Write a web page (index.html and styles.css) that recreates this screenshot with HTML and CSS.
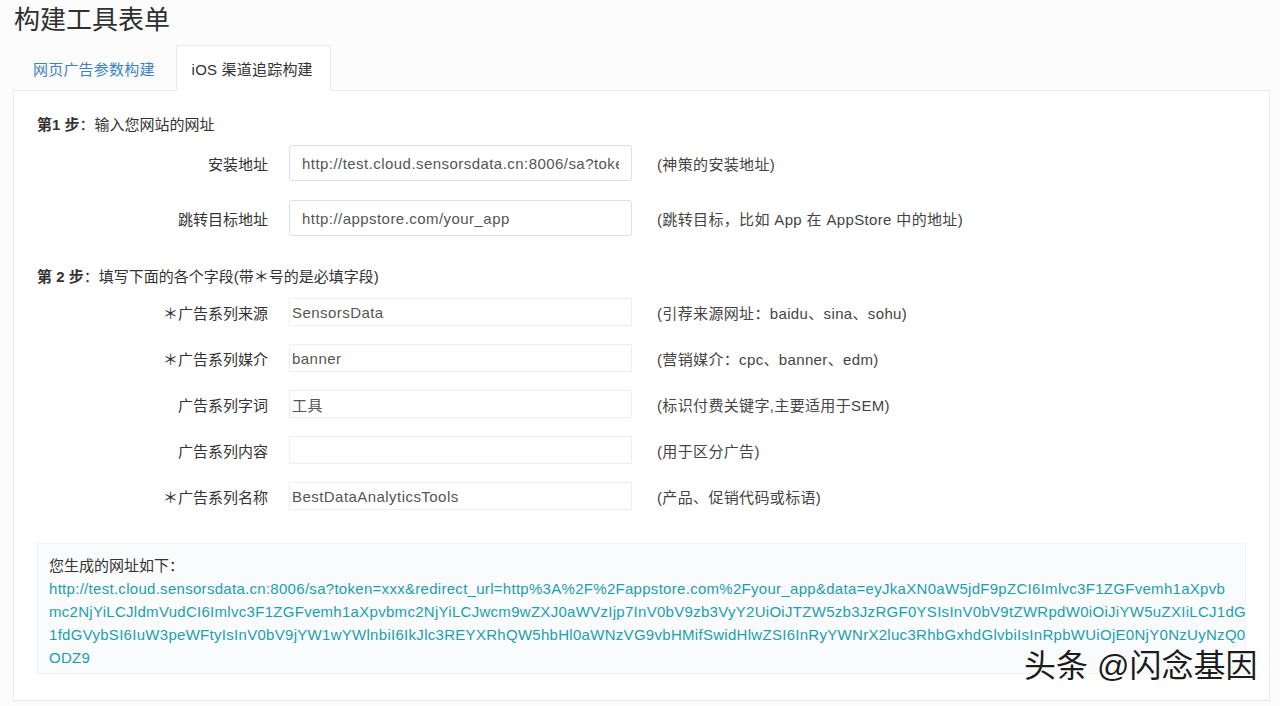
FILE: index.html
```html
<!DOCTYPE html>
<html lang="zh-CN">
<head>
<meta charset="utf-8">
<title>构建工具表单</title>
<link rel="stylesheet" href="styles.css">
</head>
<body>
<div class="page">
  <h1 class="title">构建工具表单</h1>
  <ul class="tabs">
    <li class="tab"><a class="tab-link">网页广告参数构建</a></li>
    <li class="tab active"><a class="tab-link">iOS 渠道追踪构建</a></li>
  </ul>
  <div class="panel">
    <div class="step"><b>第1 步</b>：输入您网站的网址</div>
    <div class="rows rows-lg">
      <div class="row">
        <label class="label">安装地址</label>
        <input class="input input-lg" type="text" readonly value="http://test.cloud.sensorsdata.cn:8006/sa?token=xxx">
        <span class="hint">(神策的安装地址)</span>
      </div>
      <div class="row">
        <label class="label">跳转目标地址</label>
        <input class="input input-lg" type="text" readonly value="http://appstore.com/your_app">
        <span class="hint">(跳转目标，比如 App 在 AppStore 中的地址)</span>
      </div>
    </div>
    <div class="step step2"><b>第 2 步</b>：填写下面的各个字段(带＊号的是必填字段)</div>
    <div class="rows rows-sm">
      <div class="row">
        <label class="label">＊广告系列来源</label>
        <input class="input input-sm" type="text" readonly value="SensorsData">
        <span class="hint">(引荐来源网址：baidu、sina、sohu)</span>
      </div>
      <div class="row">
        <label class="label">＊广告系列媒介</label>
        <input class="input input-sm" type="text" readonly value="banner">
        <span class="hint">(营销媒介：cpc、banner、edm)</span>
      </div>
      <div class="row">
        <label class="label">广告系列字词</label>
        <input class="input input-sm" type="text" readonly value="工具">
        <span class="hint">(标识付费关键字,主要适用于SEM)</span>
      </div>
      <div class="row">
        <label class="label">广告系列内容</label>
        <input class="input input-sm" type="text" readonly value="">
        <span class="hint">(用于区分广告)</span>
      </div>
      <div class="row">
        <label class="label">＊广告系列名称</label>
        <input class="input input-sm" type="text" readonly value="BestDataAnalyticsTools">
        <span class="hint">(产品、促销代码或标语)</span>
      </div>
    </div>
    <div class="result">
      <div class="result-title">您生成的网址如下：</div>
      <div class="url">
        <span class="url-line">http://test.cloud.sensorsdata.cn:8006/sa?token=xxx&amp;redirect_url=http%3A%2F%2Fappstore.com%2Fyour_app&amp;data=eyJkaXN0aW5jdF9pZCI6Imlvc3F1ZGFvemh1aXpvb</span>
        <span class="url-line">mc2NjYiLCJldmVudCI6Imlvc3F1ZGFvemh1aXpvbmc2NjYiLCJwcm9wZXJ0aWVzIjp7InV0bV9zb3VyY2UiOiJTZW5zb3JzRGF0YSIsInV0bV9tZWRpdW0iOiJiYW5uZXIiLCJ1dG</span>
        <span class="url-line">1fdGVybSI6IuW3peWFtyIsInV0bV9jYW1wYWlnbiI6IkJlc3REYXRhQW5hbHl0aWNzVG9vbHMifSwidHlwZSI6InRyYWNrX2luc3RhbGxhdGlvbiIsInRpbWUiOjE0NjY0NzUyNzQ0</span>
        <span class="url-line">ODZ9</span>
      </div>
    </div>
  </div>
  <div class="watermark">头条 @闪念基因</div>
</div>
</body>
</html>
```

FILE: styles.css
```css
* { box-sizing: border-box; }
html, body {
  margin: 0;
  padding: 0;
  background: #fcfcfd;
}
body {
  font-family: "Liberation Sans", "Noto Sans CJK SC", sans-serif;
  font-size: 15px;
  color: #333;
  width: 1280px;
  height: 706px;
  overflow: hidden;
}
.page {
  position: relative;
  height: 706px;
  padding: 5px 10px 0 13px;
}
.title {
  margin: 0 0 0 1px;
  font-size: 26px;
  line-height: 30px;
  font-weight: normal;
  color: #2f2f2f;
}
.tabs {
  list-style: none;
  margin: 10px 0 0 0;
  padding: 0 0 0 2px;
  display: flex;
  border-bottom: 1px solid #e7e9ec;
  height: 46px;
}
.tab {
  height: 46px;
  margin-bottom: -1px;
}
.tab-link {
  display: flex;
  align-items: center;
  height: 46px;
  padding: 0 20px 0 17px;
  color: #3b82c4;
  letter-spacing: 0.2px;
  border: 1px solid transparent;
  border-radius: 3px 3px 0 0;
}
.tab.active .tab-link {
  color: #333;
  background: #fff;
  border-color: #e7e9ec;
  border-bottom-color: #fff;
  padding: 0 17px 0 15px;
}
.panel {
  background: #fff;
  border: 1px solid #e7e9ec;
  border-top: none;
  height: 610px;
  padding: 24px 23px 0 23px;
}
.step {
  line-height: 20px;
  color: #333;
  margin-bottom: 10px;
}
.step b { font-weight: bold; }
.step2 { margin-top: 31px; margin-bottom: 11px; }
.rows {
  display: flex;
  flex-direction: column;
}
.rows-lg { gap: 19px; }
.rows-sm { gap: 18px; }
.row {
  display: grid;
  grid-template-columns: 231px 343px 1fr;
  column-gap: 21px;
  align-items: center;
}
.label {
  text-align: right;
  color: #333;
}
.input {
  display: block;
  width: 343px;
  margin: 0;
  background: #fff;
  border: 1px solid #dcdfe3;
  border-radius: 3px;
  color: #555;
  font-family: inherit;
  font-size: 15px;
  letter-spacing: 0.45px;
  outline: none;
}
.input-lg {
  height: 36px;
  padding: 0 12px;
}
.input-sm {
  height: 28px;
  padding: 0 2px;
  border-color: #eceef1;
  border-radius: 1px;
}
.hint {
  color: #444;
  margin-left: 4px;
  white-space: nowrap;
  letter-spacing: 0.35px;
}
.result {
  margin-top: 33px;
  background: #fafbfc;
  border: 1px solid #f1f2f4;
  padding: 10px 11px 4px 11px;
  height: 131px;
}
.result-title {
  line-height: 23px;
  color: #333;
}
.url {
  display: flex;
  flex-direction: column;
  color: #1a9fb0;
  line-height: 23px;
}
.url-line {
  white-space: nowrap;
  letter-spacing: 0.29px;
}
.watermark {
  position: absolute;
  left: 1024px;
  top: 645px;
  font-size: 32px;
  line-height: 42px;
  color: #1c1c1c;
  text-shadow: 1px 1px 0 #fff, -1px -1px 0 #fff;
  white-space: nowrap;
}
```
